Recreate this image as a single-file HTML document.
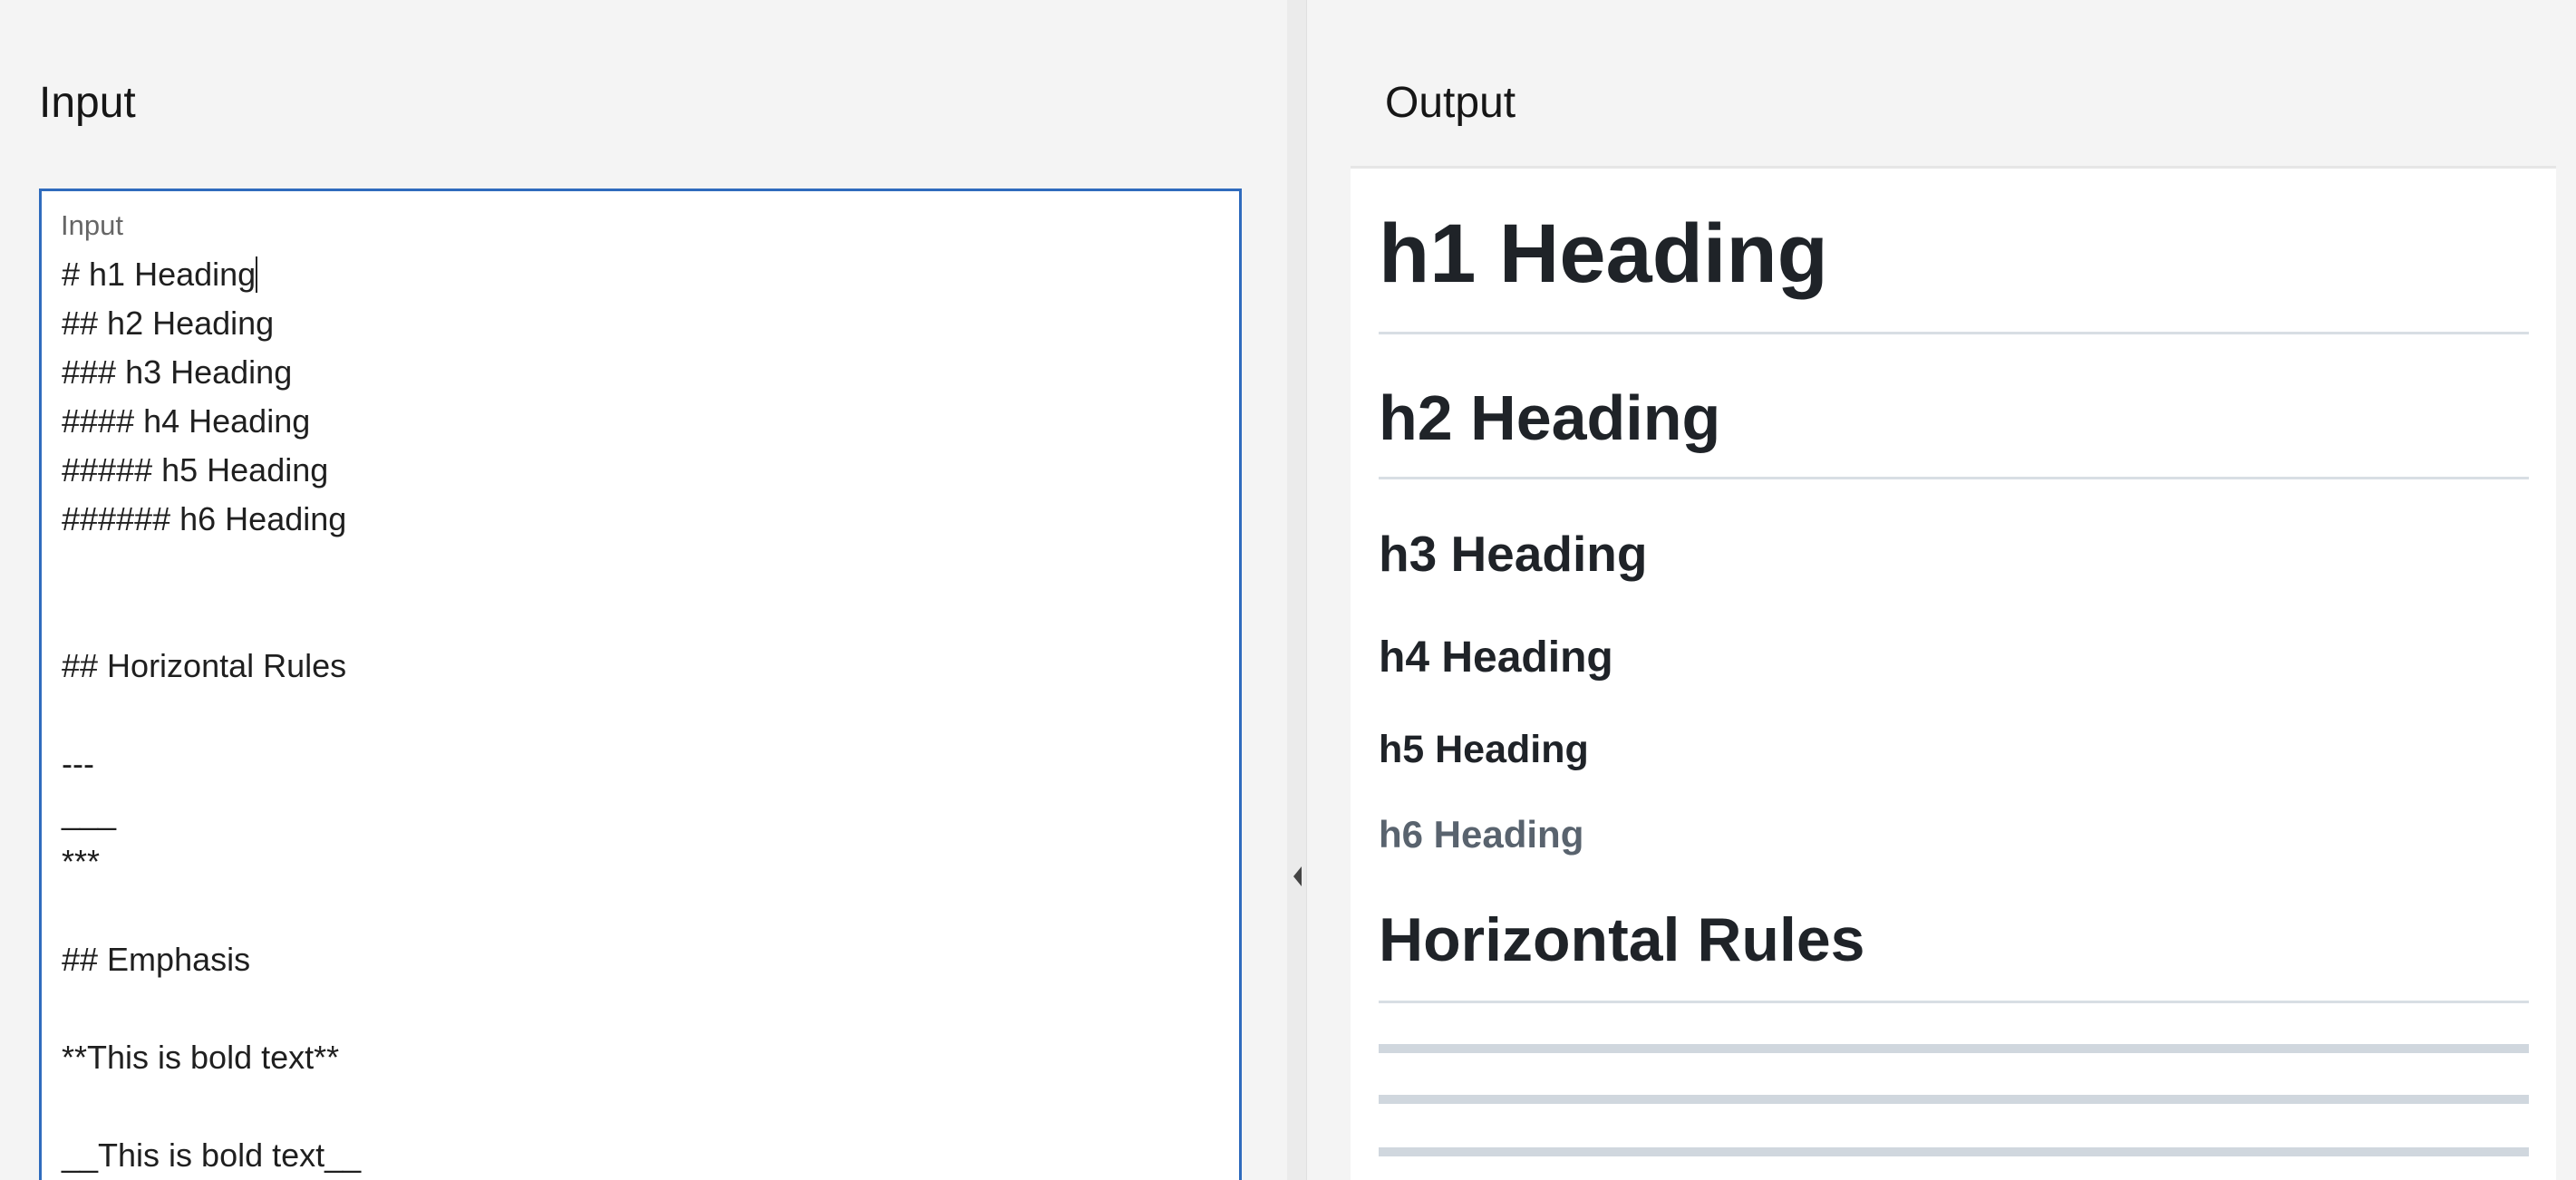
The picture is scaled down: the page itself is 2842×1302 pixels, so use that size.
<!DOCTYPE html>
<html><head><meta charset="utf-8"><style>
*{margin:0;padding:0;box-sizing:border-box}
html,body{width:2842px;height:1302px;overflow:hidden;background:#f4f4f4;font-family:"Liberation Sans",Arial,sans-serif;color:#1f2328}
#wrap{position:relative;width:2842px;height:1302px;overflow:hidden}
.abs{position:absolute;white-space:nowrap}
#div{position:absolute;left:1420px;top:0;width:22px;height:1302px;background:#ebebeb;border-right:1px solid #e0e0e0}
#ta{position:absolute;left:43px;top:208px;width:1327px;height:1094px;background:#fff;border:3px solid #2f6bbd;border-bottom:none}
.ln{position:absolute;left:22px;font-size:36px;line-height:54px;color:#1f1f1f}
#out{position:absolute;left:1490px;top:183px;width:1330px;height:1119px;background:#fff;border-top:3px solid #e6e6e6}
.h{position:absolute;left:31px;font-weight:bold;white-space:nowrap;color:#1f2328}
.rule{position:absolute;left:31px;width:1269px;height:3px;background:#d8dee4}
.hr{position:absolute;left:31px;width:1269px;height:10px;background:#d0d7de}
</style></head><body><div id="wrap">
<div class="abs" style="left:43px;top:86px;font-size:48px;color:#161616">Input</div>
<div class="abs" style="left:1528px;top:86px;font-size:48px;color:#161616">Output</div>
<div id="div"></div>
<svg style="position:absolute;left:1424px;top:954px" width="14" height="26"><path d="M12 2 L3 13 L12 24 Z" fill="#444"/></svg>
<div id="ta">
<div class="abs" style="left:21px;top:20px;font-size:31px;color:#666">Input</div>
<div class="ln" style="top:65px"># h1 Heading<span style="display:inline-block;width:2px;height:40px;background:#222;vertical-align:-8px"></span></div>
<div class="ln" style="top:119px">## h2 Heading</div>
<div class="ln" style="top:173px">### h3 Heading</div>
<div class="ln" style="top:227px">#### h4 Heading</div>
<div class="ln" style="top:281px">##### h5 Heading</div>
<div class="ln" style="top:335px">###### h6 Heading</div>
<div class="ln" style="top:497px">## Horizontal Rules</div>
<div class="ln" style="top:605px">---</div>
<div class="ln" style="top:659px">___</div>
<div class="ln" style="top:713px">***</div>
<div class="ln" style="top:821px">## Emphasis</div>
<div class="ln" style="top:929px">**This is bold text**</div>
<div class="ln" style="top:1037px">__This is bold text__</div>
</div>
<div id="out">
<div class="h" style="top:39px;font-size:92px;line-height:110px">h1 Heading</div>
<div class="rule" style="top:180px"></div>
<div class="h" style="top:235px;font-size:70px;line-height:80px">h2 Heading</div>
<div class="rule" style="top:340px"></div>
<div class="h" style="top:393px;font-size:55px;line-height:64px">h3 Heading</div>
<div class="h" style="top:512px;font-size:48px;line-height:56px">h4 Heading</div>
<div class="h" style="top:616px;font-size:43px;line-height:50px">h5 Heading</div>
<div class="h" style="top:710px;font-size:42px;line-height:50px;color:#59636e">h6 Heading</div>
<div class="h" style="top:811px;font-size:68px;line-height:80px">Horizontal Rules</div>
<div class="rule" style="top:918px"></div>
<div class="hr" style="top:966px"></div>
<div class="hr" style="top:1022px"></div>
<div class="hr" style="top:1080px"></div>
</div>
</div></body></html>
